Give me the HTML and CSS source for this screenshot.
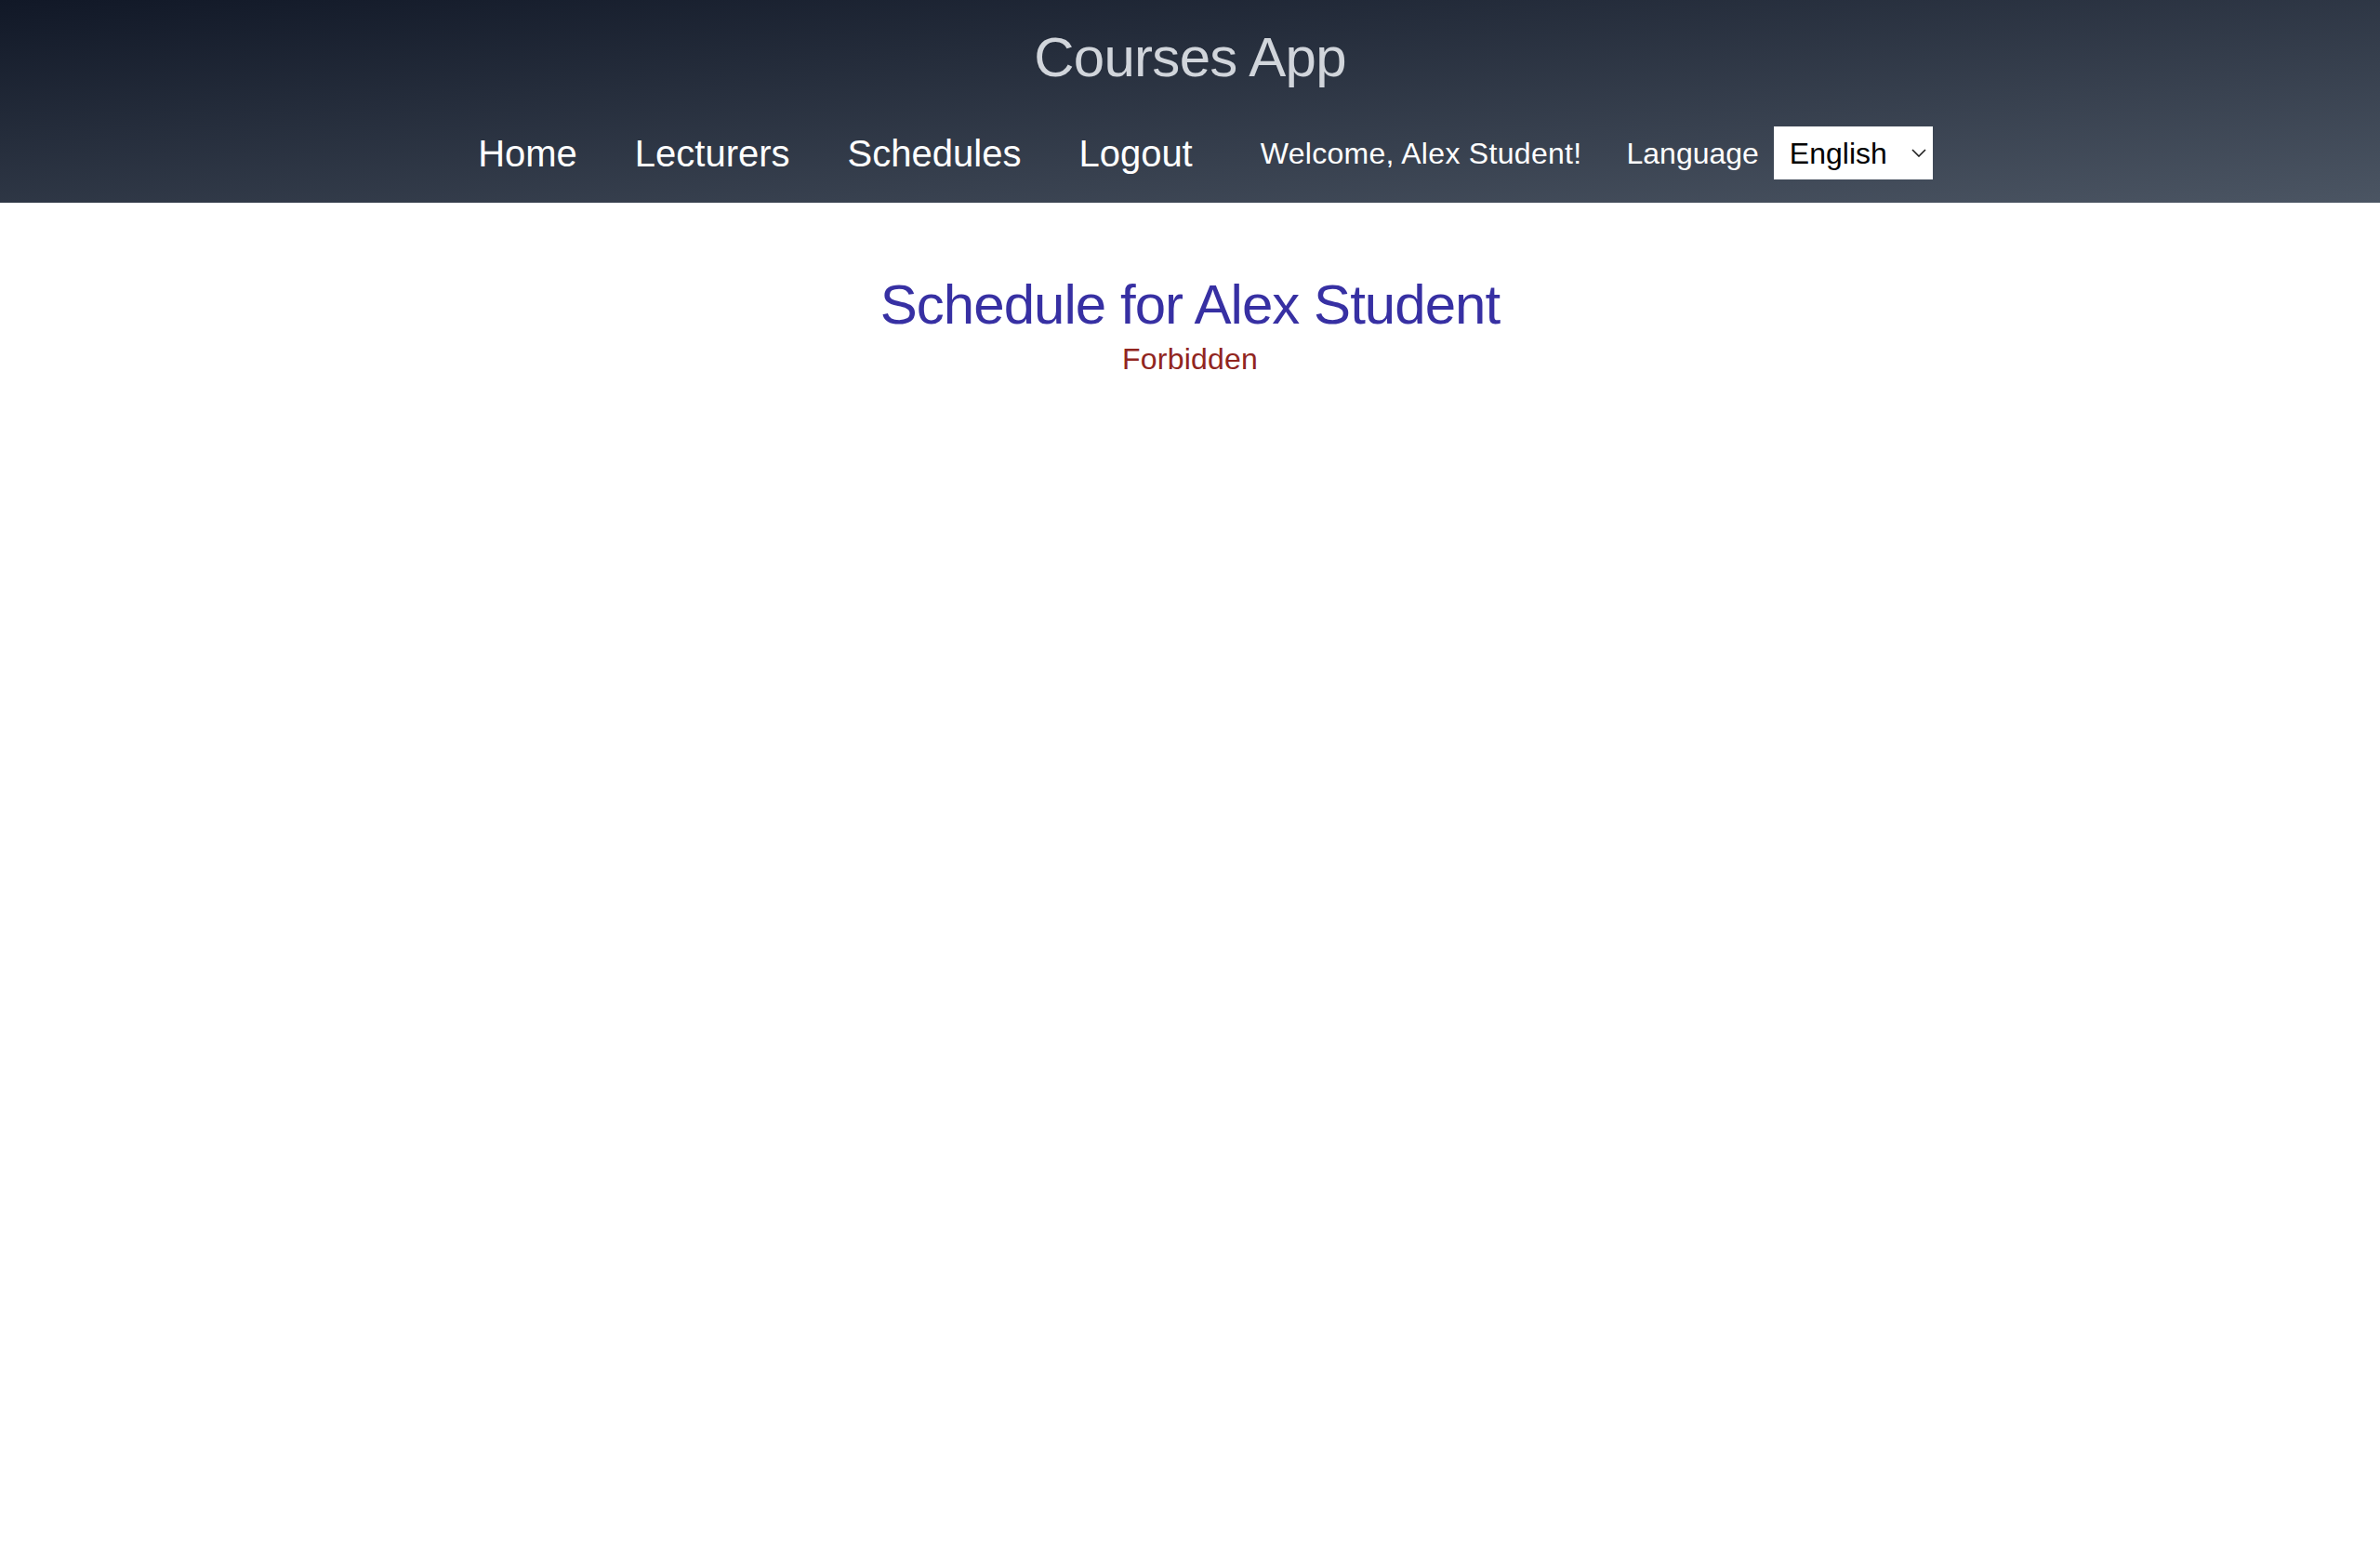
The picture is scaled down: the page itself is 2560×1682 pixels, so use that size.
FILE: index.html
```html
<!DOCTYPE html>
<html lang="en">
<head>
<meta charset="utf-8">
<title>Courses App</title>
<link rel="stylesheet" href="styles.css">
</head>
<body>
<header class="app-header">
  <h1 class="app-title">Courses App</h1>
  <nav class="app-nav">
    <ul class="nav-links">
      <li><a href="#" class="nav-link">Home</a></li>
      <li><a href="#" class="nav-link">Lecturers</a></li>
      <li><a href="#" class="nav-link">Schedules</a></li>
      <li><a href="#" class="nav-link">Logout</a></li>
    </ul>
    <span class="welcome">Welcome, Alex Student!</span>
    <label class="lang-label" for="lang">Language</label>
    <span class="select-wrap">
      <select id="lang" class="lang-select">
        <option>English</option>
      </select>
      <svg class="chevron" width="16" height="9" viewBox="0 0 16 9" aria-hidden="true"><polyline points="1,1 8,8 15,1" fill="none" stroke="#1f1f1f" stroke-width="1.6"/></svg>
    </span>
  </nav>
</header>
<main class="content">
  <h2 class="page-title">Schedule for Alex Student</h2>
  <p class="error">Forbidden</p>
</main>
</body>
</html>
```

FILE: styles.css
```css
html, body {
  margin: 0;
  padding: 0;
  background: #ffffff;
  font-family: "Liberation Sans", Arial, Helvetica, sans-serif;
}

.app-header {
  height: 218px;
  box-sizing: border-box;
  padding: 32px 0 25px;
  background: linear-gradient(to bottom right, #111827, #4b5563);
  display: flex;
  flex-direction: column;
  align-items: center;
}

.app-title {
  margin: 0 0 44px;
  font-size: 60px;
  line-height: 60px;
  font-weight: 400;
  color: #d1d5db;
  letter-spacing: -0.012em;
}

.app-nav {
  height: 57px;
  display: flex;
  align-items: center;
  justify-content: center;
  padding-left: 33px;
  color: #ffffff;
}

.nav-links {
  list-style: none;
  margin: 0;
  padding: 0;
  display: flex;
  gap: 62px;
}

.nav-link {
  color: #ffffff;
  text-decoration: none;
  font-size: 40px;
  line-height: 48px;
}

.welcome {
  margin-left: 73px;
  font-size: 32px;
  line-height: 40px;
  letter-spacing: 0.3px;
}

.lang-label {
  margin-left: 48px;
  font-size: 32px;
  line-height: 40px;
}

.select-wrap {
  position: relative;
  margin-left: 16px;
  display: inline-block;
  width: 171px;
  height: 57px;
}

.lang-select {
  appearance: none;
  -webkit-appearance: none;
  width: 171px;
  height: 57px;
  border: none;
  border-radius: 0;
  background: #ffffff;
  color: #000000;
  padding: 0 0 0 17px;
  margin: 0;
  font-family: "Liberation Sans", Arial, Helvetica, sans-serif;
  font-size: 32px;
}

.chevron {
  position: absolute;
  right: 7px;
  top: 24px;
  pointer-events: none;
}

.content {
  padding-top: 74px;
  text-align: center;
}

.page-title {
  margin: 0 0 4px;
  font-size: 60px;
  line-height: 72px;
  font-weight: 400;
  color: #3730a3;
  letter-spacing: -0.016em;
}

.error {
  margin: 0;
  font-size: 32px;
  line-height: 36px;
  color: #912520;
  letter-spacing: 0.2px;
}
```
